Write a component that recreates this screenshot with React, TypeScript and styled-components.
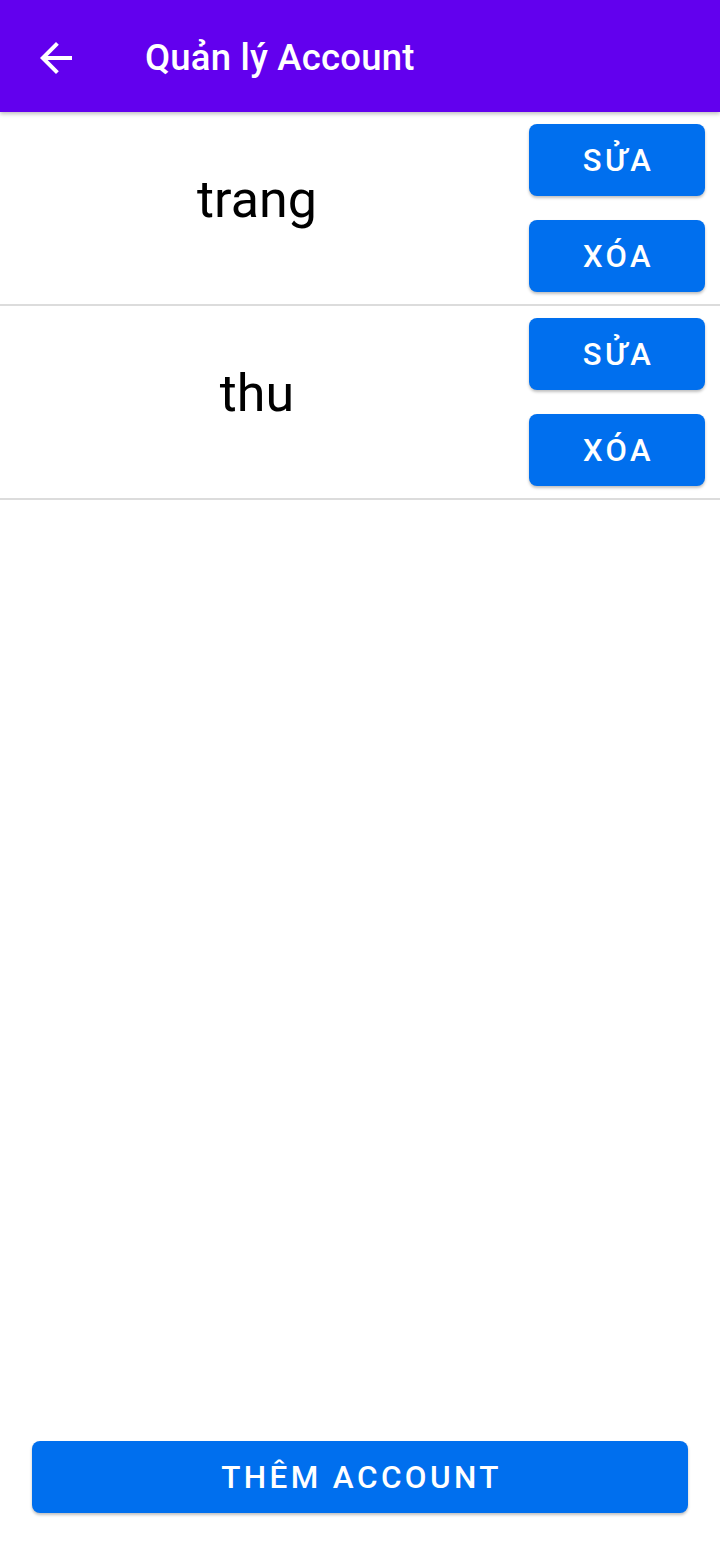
import React from "react";
import styled, { createGlobalStyle } from "styled-components";

const Global = createGlobalStyle`
  html, body { margin: 0; padding: 0; background: #fff; }
  body { font-family: Roboto, "Noto Sans", sans-serif; }
  * { box-sizing: border-box; }
`;

const Screen = styled.div`
  width: 720px;
  height: 1545px;
  display: flex;
  flex-direction: column;
  background: #fff;
`;

const AppBar = styled.header`
  height: 112px;
  flex: none;
  background: #6200ee;
  display: flex;
  align-items: center;
  padding-left: 32px;
  padding-top: 3px;
  box-shadow: 0 2px 4px rgba(0, 0, 0, 0.25);
  position: relative;
  z-index: 1;
`;

const BackButton = styled.div`
  width: 48px;
  height: 48px;
  display: flex;
  align-items: center;
  justify-content: center;
`;

const Title = styled.h1`
  margin: 0 0 0 65px;
  color: #fff;
  font-family: Roboto, sans-serif;
  font-weight: 500;
  font-size: 36.5px;
  letter-spacing: 0.2px;
`;

const List = styled.div`
  flex: 1;
  display: flex;
  flex-direction: column;
`;

const Row = styled.div`
  display: flex;
  align-items: center;
  padding: 12px 15px 12px 0;
  border-bottom: 2px solid #dcdcdc;
`;

const Name = styled.div`
  flex: 1;
  text-align: center;
  font-family: Roboto, sans-serif;
  font-size: 52px;
  color: #000;
  padding-right: 15px;
  padding-bottom: 18px;
`;

const Actions = styled.div`
  display: flex;
  flex-direction: column;
  gap: 24px;
`;

const Button = styled.button<{ $wide?: boolean }>`
  width: ${(p) => (p.$wide ? "656px" : "176px")};
  height: 72px;
  border: none;
  border-radius: 8px;
  background: #006fee;
  color: #fff;
  font-family: Roboto, sans-serif;
  font-weight: 500;
  font-size: ${(p) => (p.$wide ? "31.5px" : "31px")};
  letter-spacing: 3.4px;
  text-transform: uppercase;
  box-shadow: 0 2px 3px rgba(0, 0, 0, 0.25);
  padding: 0 0 0 3px;
  cursor: pointer;
`;

const Footer = styled.div`
  display: flex;
  justify-content: center;
  padding: 0 32px 32px;
`;

const accounts = ["trang", "thu"];

export default function App() {
  return (
    <Screen>
      <Global />
      <AppBar>
        <BackButton>
          <svg width="48" height="48" viewBox="0 0 24 24" fill="#fff">
            <path d="M20 11H7.83l5.59-5.59L12 4l-8 8 8 8 1.41-1.41L7.83 13H20v-2z" />
          </svg>
        </BackButton>
        <Title>Quản lý Account</Title>
      </AppBar>
      <List>
        {accounts.map((a) => (
          <Row key={a}>
            <Name>{a}</Name>
            <Actions>
              <Button>Sửa</Button>
              <Button>Xóa</Button>
            </Actions>
          </Row>
        ))}
      </List>
      <Footer>
        <Button $wide>Thêm Account</Button>
      </Footer>
    </Screen>
  );
}
